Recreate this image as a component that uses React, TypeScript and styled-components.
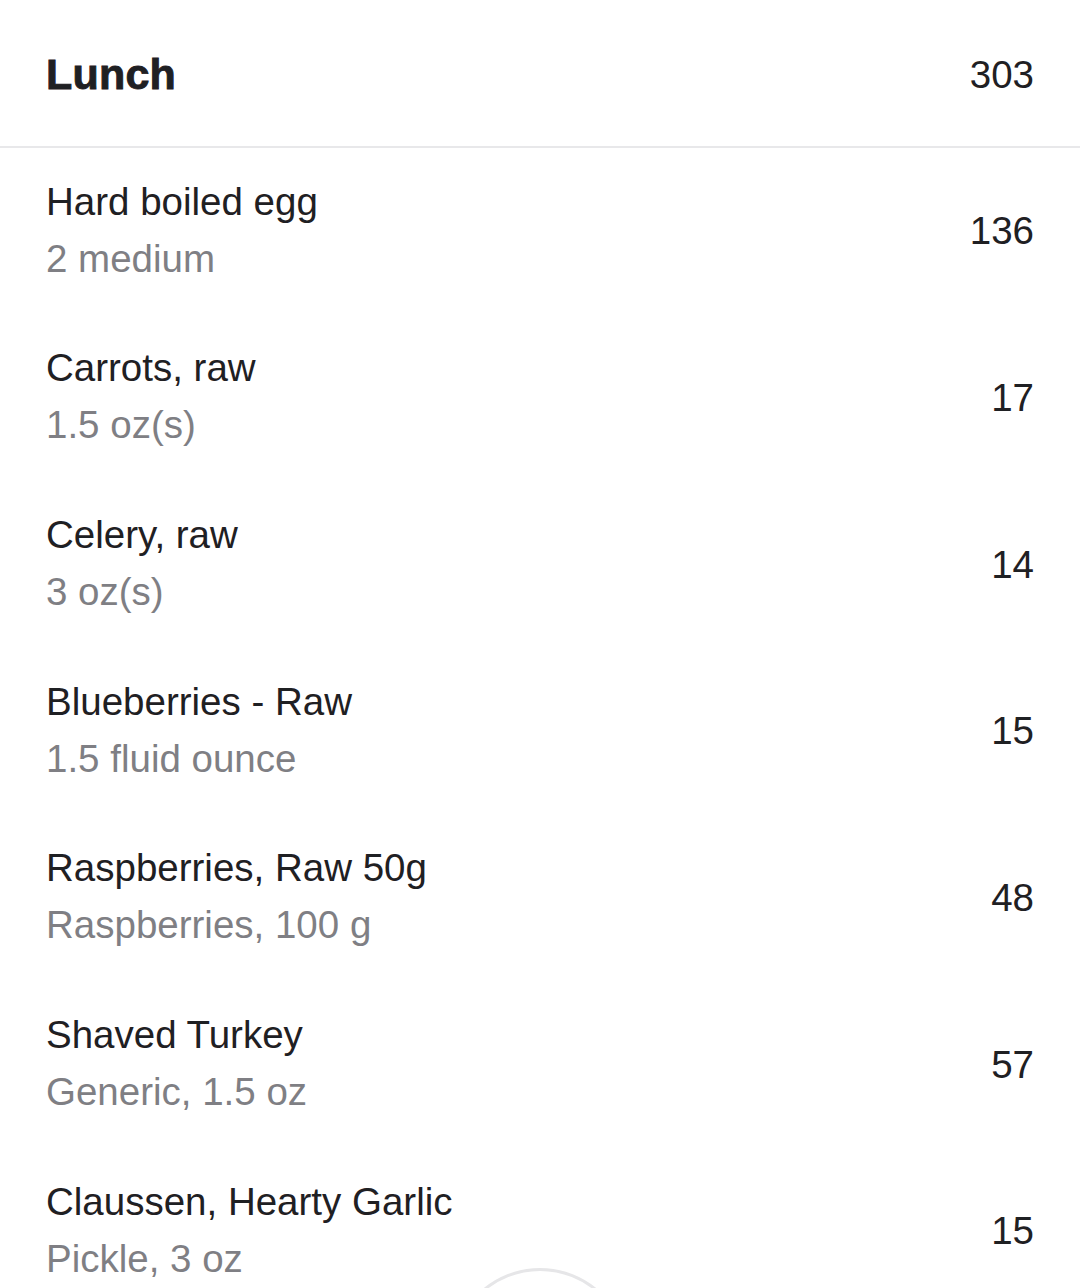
import styled, { createGlobalStyle } from 'styled-components';

const GlobalStyle = createGlobalStyle`
  html, body {
    margin: 0;
    padding: 0;
    background: #ffffff;
  }
  body {
    font-family: "Liberation Sans", Arial, Helvetica, sans-serif;
    -webkit-font-smoothing: antialiased;
  }
`;

const Screen = styled.div`
  position: relative;
  width: 1080px;
  height: 1288px;
  overflow: hidden;
  background: #ffffff;
`;

const MealHeader = styled.div`
  display: flex;
  align-items: center;
  justify-content: space-between;
  height: 148px;
  padding: 3px 46px 0 46px;
  box-sizing: border-box;
  border-bottom: 2px solid #e8e8ea;
`;

const MealTitle = styled.h2`
  margin: 0;
  font-size: 43px;
  font-weight: 700;
  color: #1f2023;
  letter-spacing: 0.2px;
  -webkit-text-stroke: 0.9px #1f2023;
`;

const Calories = styled.span`
  font-size: 38.5px;
  color: #1f2023;
`;

const FoodList = styled.ul`
  list-style: none;
  margin: 0;
  padding: 0;
`;

const FoodRow = styled.li`
  display: flex;
  align-items: center;
  justify-content: space-between;
  height: 166.67px;
  padding: 0 46px;
  box-sizing: border-box;
`;

const FoodInfo = styled.div`
  display: flex;
  flex-direction: column;
  margin-top: -3px;
`;

const FoodName = styled.span`
  font-size: 38.5px;
  line-height: 57px;
  color: #1f2023;
`;

const FoodServing = styled.span`
  font-size: 38.5px;
  line-height: 57px;
  color: #7f7f84;
`;

// floating add button, mostly below the fold
const AddButton = styled.button`
  position: absolute;
  left: 451px;
  top: 1268px;
  width: 178px;
  height: 178px;
  border-radius: 50%;
  border: 3px solid #e6e6e8;
  background: #ffffff;
  padding: 0;
`;

const meal = {
  title: 'Lunch',
  total: 303,
  foods: [
    { name: 'Hard boiled egg', serving: '2 medium', kcal: 136 },
    { name: 'Carrots, raw', serving: '1.5 oz(s)', kcal: 17 },
    { name: 'Celery, raw', serving: '3 oz(s)', kcal: 14 },
    { name: 'Blueberries - Raw', serving: '1.5 fluid ounce', kcal: 15 },
    { name: 'Raspberries, Raw 50g', serving: 'Raspberries, 100 g', kcal: 48 },
    { name: 'Shaved Turkey', serving: 'Generic, 1.5 oz', kcal: 57 },
    { name: 'Claussen, Hearty Garlic', serving: 'Pickle, 3 oz', kcal: 15 },
  ],
};

const App: React.FC = () => {
  return (
    <Screen>
      <GlobalStyle />
      <MealHeader>
        <MealTitle>{meal.title}</MealTitle>
        <Calories>{meal.total}</Calories>
      </MealHeader>
      <FoodList>
        {meal.foods.map(food => (
          <FoodRow key={food.name}>
            <FoodInfo>
              <FoodName>{food.name}</FoodName>
              <FoodServing>{food.serving}</FoodServing>
            </FoodInfo>
            <Calories>{food.kcal}</Calories>
          </FoodRow>
        ))}
      </FoodList>
      <AddButton aria-label="Add food" />
    </Screen>
  );
};

export default App;
